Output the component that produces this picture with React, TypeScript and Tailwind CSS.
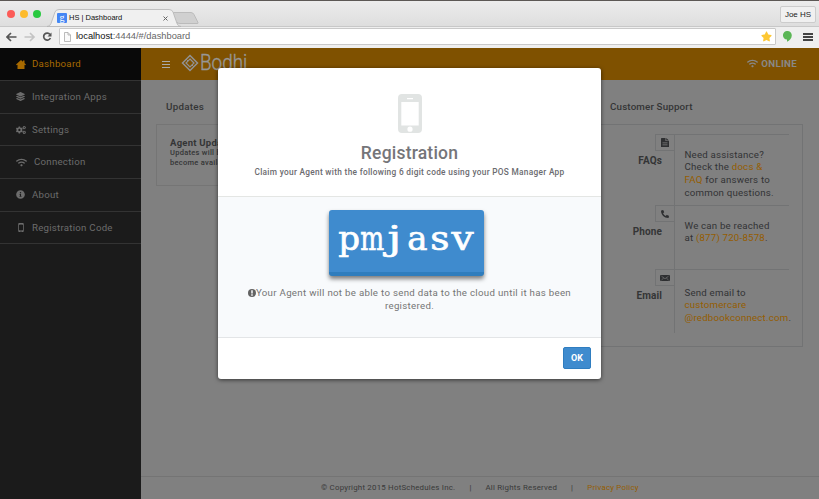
import type { ReactNode } from 'react';
import { FaWifi, FaInfoCircle, FaCogs, FaPhoneAlt, FaLayerGroup, FaStar } from 'react-icons/fa';

const HomeIcon = () => (
  <svg width="10" height="9" viewBox="0 0 20 18" fill="currentColor">
    <path d="M10 0 20 9.2l-1.600 1.200L17 9.600V18H3V9.600l-1.400.8L0 9.200z" />
    <path d="M14 1h3v6h-3z" />
  </svg>
);

const MobileIcon = ({ width, height }: { width: number; height: number }) => (
  <svg width={width} height={height} viewBox="0 0 24 39" fill="currentColor" fillRule="evenodd">
    <path d="M4 0h16a4 4 0 0 1 4 4v31a4 4 0 0 1-4 4H4a4 4 0 0 1-4-4V4a4 4 0 0 1 4-4zM3.300 8v23.500h17.400V8zM9 4.100v1.100h6V4.100zM12 32.600a2.600 2.600 0 1 0 0 5.200 2.600 2.600 0 0 0 0-5.200z" />
  </svg>
);

const PageIcon = () => (
  <svg width="8" height="9" viewBox="0 0 16 18" fill="currentColor" fillRule="evenodd">
    <path d="M1 0h8v6h7v12H0V1zM3 9v1.300h10V9zM3 13v1.300h10V13z" />
    <path d="M10.500 0 16 4.800h-5.500z" />
  </svg>
);

const MailIcon = () => (
  <svg width="10" height="6" viewBox="0 0 20 12">
    <rect width="20" height="12" rx="2" fill="#2e2f31" />
    <path d="M3 2.500 10 7.500 17 2.500M3 10l4.500-4M17 10l-4.500-4" stroke="#808080" strokeWidth="1.200" fill="none" />
  </svg>
);

const BangIcon = () => (
  <svg className="inline-block align-[-1px]" width="8" height="8" viewBox="0 0 16 16">
    <circle cx="8" cy="8" r="8" fill="#626262" />
    <path d="M6.500 2.500h3v6.500h-3zM6.500 10.500h3v3h-3z" fill="#f9fafc" />
  </svg>
);

const NAV: { label: string; icon: ReactNode; text: string }[] = [
  { label: 'Integration Apps', icon: <FaLayerGroup size={9} />, text: 'pl-[7px]' },
  { label: 'Settings', icon: <FaCogs size={10} />, text: 'pl-[6px]' },
  { label: 'Connection', icon: <FaWifi size={11} />, text: 'pl-[7px]' },
  { label: 'About', icon: <FaInfoCircle size={9} />, text: 'pl-[7px]' },
  { label: 'Registration Code', icon: <MobileIcon width={6} height={9} />, text: 'pl-[7px]' },
];

function Browser() {
  return (
    <div className="relative h-12 shrink-0 border-t border-[#5c5855] bg-[#e4e4e4] font-['Liberation_Sans',sans-serif]">
      <div className="flex h-[25px] items-start bg-gradient-to-b from-[#ececec] to-[#dedede]">
        <div className="flex gap-[5px] pt-[9px] pl-[7px]">
          <span className="size-2 rounded-full bg-[#fc5b57]" />
          <span className="size-2 rounded-full bg-[#fdbb2d]" />
          <span className="size-2 rounded-full bg-[#29c940]" />
        </div>
        <div className="relative mt-2 ml-1.5 h-[18px] w-[153px] shrink-0">
          <svg className="absolute inset-0" width="153" height="18" viewBox="0 0 153 18">
            <path d="M130 15.500 126 4.500q-.5-1 1-1h17q2 0 3 2l4 8q.5 1-1 1h-17q-2 0-3-1z" fill="#d0d0d0" stroke="#b4b4b4" strokeWidth=".8" />
            <path d="M0 17.500q3 0 4-3L8 3q1-2.500 4-2.500h110q3 0 4 2.500l4 11.500q1 3 4 3z" fill="#f0f0f0" stroke="#b5b5b5" strokeWidth=".8" />
          </svg>
          <div className="relative flex h-full items-center pl-[10px]">
            <span className="flex size-[10px] items-center justify-center rounded-[1px] bg-[#4486f4] font-['Liberation_Serif',serif] text-[10px] leading-none text-white">g</span>
            <span className="w-[54px] pl-[2px] text-[7.500px] whitespace-nowrap text-[#111]">HS | Dashboard</span>
            <svg className="ml-[42px]" width="5" height="5" viewBox="0 0 5 5"><path d="M.5.5l4 4m0-4-4 4" stroke="#666" /></svg>
          </div>
        </div>
        <div className="mt-[5px] mr-[3px] ml-auto flex h-[17px] w-[36px] items-center justify-center rounded-[2px] border border-[#ccc] bg-[#f0f0f0] text-[8px] whitespace-nowrap text-[#222]">Joe HS</div>
      </div>
      <div className="flex h-[22px] items-center border-t border-[#c8c8c8] bg-[#efefef] pr-[6px] pb-[2px] pl-[6px]">
        <svg width="48" height="10" viewBox="0 0 48 10" fill="none" strokeWidth="1.700">
          <path d="M10.500 5H1.500M5 1 1 5l4 4" stroke="#555" />
          <path d="M18.500 5h9M24 1l4 4-4 4" stroke="#c4c4c4" />
          <path d="M44 2.500a3.500 3.500 0 1 0 .4 3.500" stroke="#555" />
          <path d="M45.500 .5v4h-4z" fill="#555" />
        </svg>
        <div className="ml-[5px] flex h-[17px] w-[717px] items-center rounded-[1px] border border-[#c9c9c9] bg-white pr-[3px] pl-[4px]">
          <svg width="7" height="10" viewBox="0 0 7 10" fill="#fafafa" stroke="#aaa" strokeWidth=".8"><path d="M.5.500H4L6.500 3v6.500h-6zM4 .5V3h2.500" /></svg>
          <span className="pt-px pl-[5px] text-[9.300px] whitespace-nowrap text-[#666]"><span className="text-[#111]">localhost</span>:4444/#/dashboard</span>
          <FaStar className="ml-auto" size={11} color="#fdc733" />
        </div>
        <svg className="ml-[7px]" width="9" height="11" viewBox="0 0 9 11"><path d="M4.500 0a4.300 4.300 0 0 1 4.300 4.300C8.800 7.500 6.500 9.500 4 10.800V8.600A4.300 4.300 0 0 1 4.500 0z" fill="#5bb656" /></svg>
        <div className="ml-[11px] flex w-[10px] flex-col gap-[1px]">
          <span className="h-[2px] bg-[#444]" /><span className="h-[2px] bg-[#444]" /><span className="h-[2px] bg-[#444]" />
        </div>
      </div>
    </div>
  );
}

function SupportRow({ icon, label, height, pad, children }: { icon: ReactNode; label: string; height: string; pad: string; children: ReactNode }) {
  return (
    <div className={`flex ${height}`}>
      <div className="flex w-[54px] flex-col items-end">
        <div className="flex h-[17px] w-[19px] items-center justify-center border border-r-0 border-[#727374] text-[#2e2f31]">{icon}</div>
        <div className="pt-[3px] pr-[12px] text-[10px] leading-[14px] font-bold tracking-[0.1px] text-[#343536]">{label}</div>
      </div>
      <div className={`w-[115px] border-t border-l border-[#727374] pl-[9.500px] ${pad} text-[9.700px] leading-[12.900px] tracking-[0.200px] whitespace-nowrap text-[#323335]`}>{children}</div>
    </div>
  );
}

const CODE = [
  { char: 'p', shape: 'scale-x-100' },
  { char: 'm', shape: 'scale-x-[0.740]' },
  { char: 'j', shape: 'scale-x-[1.300]' },
  { char: 'a', shape: 'scale-x-100' },
  { char: 's', shape: 'scale-x-[1.100]' },
  { char: 'v', shape: 'scale-x-[1.150]' },
];

function Modal() {
  return (
    <div className="absolute top-[68px] left-[218px] flex h-[311px] w-[383px] flex-col overflow-hidden rounded-[3px] bg-white text-center shadow-[0_1px_4px_rgba(0,0,0,0.6)]">
      <div className="flex h-[129px] flex-col items-center border-b border-[#e4e6e4] pt-[26px]">
        <div className="text-[#e1e4e3]"><MobileIcon width={24} height={39} /></div>
        <h1 className="pt-[10px] text-[17.500px] leading-[20px] font-medium tracking-[0.200px] text-[#757579]">Registration</h1>
        <p className="pt-[3px] text-[8.300px] leading-[12px] font-medium tracking-[0.300px] whitespace-nowrap text-[#6b6b6f]">Claim your Agent with the following 6 digit code using your POS Manager App</p>
      </div>
      <div className="flex h-[141px] flex-col items-center border-b border-[#e3e5e7] bg-[#f8fafc] pt-[13px]">
        <div className="mr-[7px] flex h-[66px] w-[155px] justify-center rounded-[3px] border-b-[4px] border-[#2f7dbd] bg-[#3f8bce] pt-[5px] font-['DejaVu_Serif',serif] text-[34px] leading-[46px] text-white shadow-[0_3px_4px_rgba(0,0,0,0.5)] [-webkit-text-stroke:0.700px_white]">
          {CODE.map(({ char, shape }) => (
            <span key={char} className="flex w-[22.800px] justify-center"><span className={shape}>{char}</span></span>
          ))}
        </div>
        <p className="w-[344px] pt-[11px] text-[9.700px] leading-[12.700px] tracking-[0.300px] text-[#757575]"><BangIcon />Your Agent will not be able to send data to the cloud until it has been<br />registered.</p>
      </div>
      <div className="flex flex-1 justify-end pt-[9px] pr-[10px]">
        <button className="h-[22px] w-[28px] rounded-[2px] border border-[#2f7dc0] bg-[#3f8bce] pt-px text-[9px] font-bold text-white">OK</button>
      </div>
    </div>
  );
}

export default function App() {
  return (
    <div className="relative flex h-[499px] w-[819px] flex-col overflow-hidden bg-[#808080] font-['Roboto',sans-serif]">
      <Browser />
      <div className="flex min-h-0 flex-1">
        <aside className="w-[141px] bg-[#1b1b1b] text-[9.700px] tracking-[0.240px] whitespace-nowrap text-[#6c6c6c]">
          <div className="flex h-8 items-center bg-[#090909] pl-4 text-[#a86a00]">
            <HomeIcon /><span className="pt-px pl-[6px]">Dashboard</span>
          </div>
          {NAV.map((item) => (
            <div key={item.label} className="flex h-[32.700px] items-center border-t border-[#333] pl-4">
              <span className="flex min-w-[9px] justify-center">{item.icon}</span>
              <span className={`pt-px ${item.text}`}>{item.label}</span>
            </div>
          ))}
          <div className="border-t border-[#333]" />
        </aside>
        <main className="flex flex-1 flex-col">
          <header className="flex h-8 shrink-0 items-center bg-[#7f5100] pr-[22px] pl-[21px] text-[#969696]">
            <div className="flex w-2 flex-col gap-[2px]">
              <span className="h-px bg-[#aaa]" /><span className="h-px bg-[#aaa]" /><span className="h-px bg-[#aaa]" />
            </div>
            <svg className="mb-[3px] ml-[11px]" width="18" height="18" viewBox="0 0 18 18" fill="none" stroke="#929292">
              <path d="M9 1.500 16.500 9 9 16.500 1.500 9z" strokeWidth="1.500" />
              <path d="M9 5 13 9l-4 4-4-4z" strokeWidth="1.200" />
              <path d="m5 5 2 2m4 4 2 2" />
            </svg>
            <span className="mb-[3px] ml-px w-[46px] origin-left scale-x-[0.840] text-[22.500px] leading-none font-light text-[#979797] [-webkit-text-stroke:0.400px_#979797]">Bodhi</span>
            <span className="ml-auto flex items-center gap-[3px] text-[9.700px] font-bold tracking-[0.300px] text-[#888]"><FaWifi size={11} /><span className="pt-px">ONLINE</span></span>
          </header>
          <div className="flex flex-1 justify-between pr-4 pl-[15px] text-[#343536]">
            <section className="w-[150px] pt-[20px]">
              <h2 className="pl-[10px] text-[9.800px] leading-[14px] font-medium tracking-[0.250px]">Updates</h2>
              <div className="mt-[10px] h-[62px] border border-[#757575] pt-[12px] pl-[13px] whitespace-nowrap">
                <h3 className="text-[9.500px] leading-[11px] font-bold tracking-[0.250px]">Agent Updates</h3>
                <p className="text-[7.500px] leading-[9.600px] font-medium tracking-[0.280px]">Updates will be applied<br />become available.</p>
              </div>
            </section>
            <section className="w-[204px] pt-[20px]">
              <h2 className="pl-[11px] text-[9.800px] leading-[14px] font-medium tracking-[0.150px]">Customer Support</h2>
              <div className="mt-[10px] h-[223px] border border-[#727374] pt-[9px] pl-[20px]">
                <SupportRow icon={<PageIcon />} label="FAQs" height="h-[71px]" pad="pt-[13.500px]">
                  Need assistance?<br />Check the <a className="text-[#955d00]">docs &amp;<br />FAQ</a> for answers to<br />common questions.
                </SupportRow>
                <SupportRow icon={<FaPhoneAlt size={8} />} label="Phone" height="h-[64px]" pad="pt-[13.500px]">
                  We can be reached<br />at <a className="text-[#955d00]">(877) 720-8578</a>.
                </SupportRow>
                <SupportRow icon={<MailIcon />} label="Email" height="h-[64px]" pad="pt-[16.500px]">
                  Send email to<br /><a className="text-[#955d00]">customercare<br />@redbookconnect.com</a>.
                </SupportRow>
              </div>
            </section>
          </div>
          <footer className="flex h-[23px] items-center border-t border-[#747474] pl-[180px] text-[7.900px] tracking-[0.210px] whitespace-nowrap text-[#383939]">
            <span>© Copyright 2015 HotSchedules Inc.</span><span className="px-[14px]">|</span><span>All Rights Reserved</span><span className="px-[14px]">|</span><a className="text-[#955d00]">Privacy Policy</a>
          </footer>
        </main>
      </div>
      <Modal />
    </div>
  );
}
